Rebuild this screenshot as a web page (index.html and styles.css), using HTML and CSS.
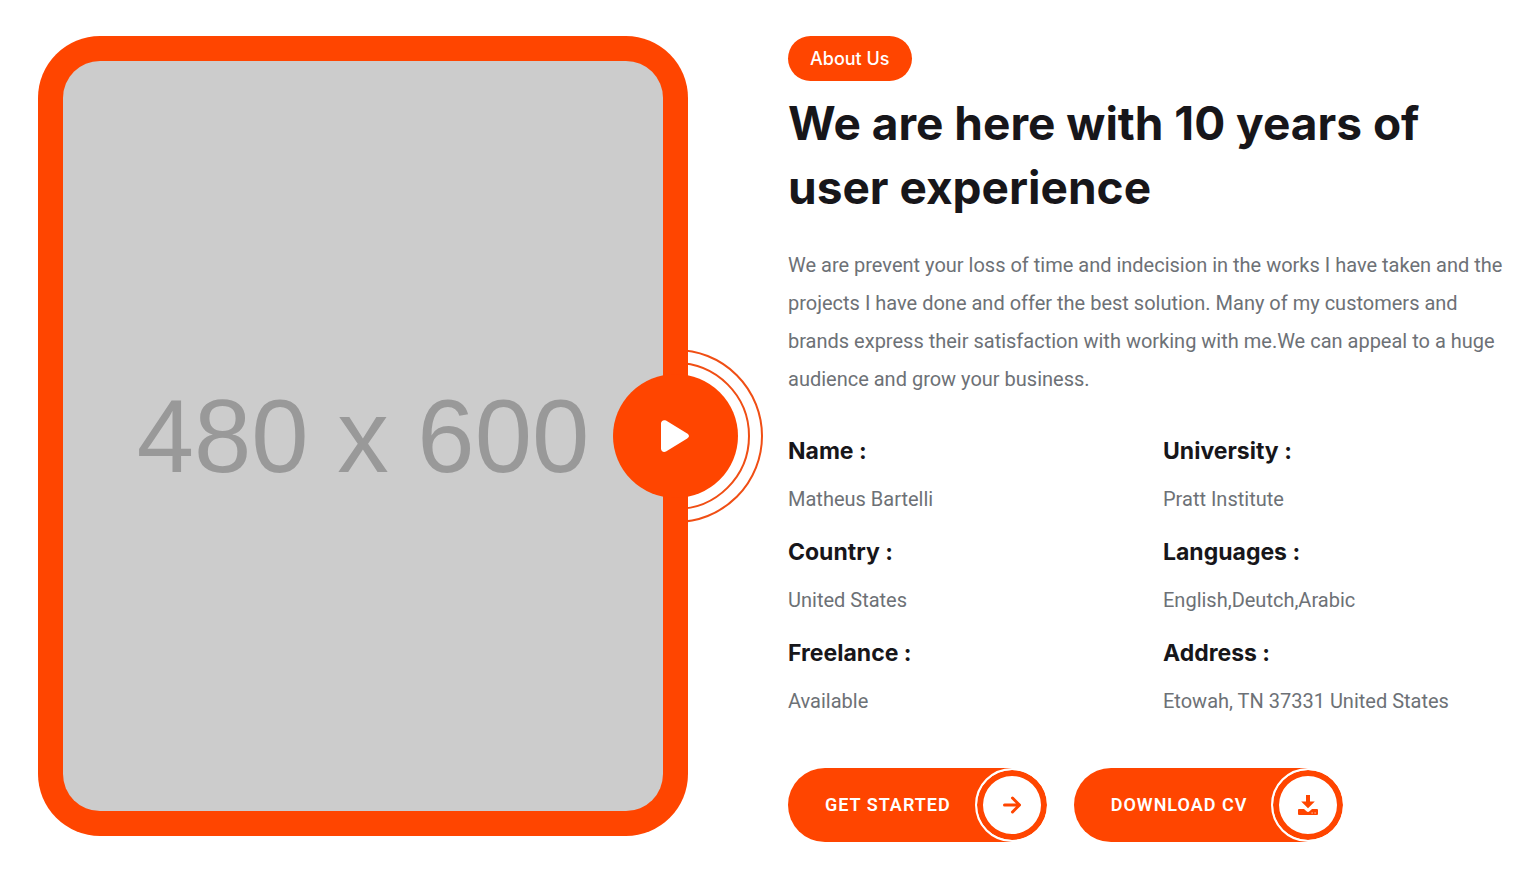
FILE: index.html
```html
<!DOCTYPE html>
<html lang="en">
<head>
<meta charset="utf-8">
<meta name="viewport" content="width=device-width, initial-scale=1">
<title>About Us</title>
<link rel="stylesheet" href="styles.css">
</head>
<body>
<main class="about">
  <div class="media">
    <div class="frame">
      <div class="placeholder">480 x 600</div>
    </div>
    <button class="play" type="button" aria-label="Play video">
      <svg class="play-icon" viewBox="0 0 28 32" aria-hidden="true"><path d="M0 3.500C0 .8 2.600-.7 5 .6L26.200 13.600C28.500 15 28.500 17 26.200 18.400L5 31.400C2.600 32.700 0 31.200 0 28.500Z"/></svg>
    </button>
  </div>
  <section class="content">
    <span class="badge">About Us</span>
    <h1 class="title">We are here with 10 years of user experience</h1>
    <p class="text">We are prevent your loss of time and indecision in the works I have taken and the projects I have done and offer the best solution. Many of my customers and brands express their satisfaction with working with me.We can appeal to a huge audience and grow your business.</p>
    <dl class="facts">
      <div class="fact"><dt class="label">Name :</dt><dd class="value">Matheus Bartelli</dd></div>
      <div class="fact"><dt class="label">University :</dt><dd class="value">Pratt Institute</dd></div>
      <div class="fact"><dt class="label">Country :</dt><dd class="value">United States</dd></div>
      <div class="fact"><dt class="label">Languages :</dt><dd class="value">English,Deutch,Arabic</dd></div>
      <div class="fact"><dt class="label">Freelance :</dt><dd class="value">Available</dd></div>
      <div class="fact"><dt class="label">Address :</dt><dd class="value">Etowah, TN 37331 United States</dd></div>
    </dl>
    <div class="actions">
      <a class="btn" href="#start">GET STARTED
        <span class="btn-icon"><svg width="18" height="18" viewBox="0 0 18 18" aria-hidden="true"><path class="stroke" d="M1.500 9H16M9.500 2L16.500 9L9.500 16"/></svg></span>
      </a>
      <a class="btn" href="#cv">DOWNLOAD CV
        <span class="btn-icon"><svg width="20" height="20" viewBox="0 0 20 20" aria-hidden="true"><path class="fill" d="M8 0H12V6.500H16.800L10 13.300L3.200 6.500H8Z"/><path class="fill" fill-rule="evenodd" d="M1 14H6L8.500 16.300C9.400 17.100 10.600 17.100 11.500 16.300L14 14H19Q20 14 20 15V19Q20 20 19 20H1Q0 20 0 19V15Q0 14 1 14ZM13.600 17.500V18.500H14.600V17.500ZM16.600 17.500V18.500H17.600V17.500Z"/></svg></span>
      </a>
    </div>
  </section>
</main>
</body>
</html>
```
FILE: styles.css
```css
:root {
  --accent: #ff4500;
  --dark: #17161a;
  --muted: #6d7176;
  --heading: Inter, "Open Sans", sans-serif;
}

*,
*::before,
*::after {
  box-sizing: border-box;
}

body {
  margin: 0;
  background: #fff;
  font-family: Roboto, "Liberation Sans", sans-serif;
  font-size: 20px;
  line-height: 38px;
  color: var(--muted);
}

.about {
  display: grid;
  grid-template-columns: 650fr 725fr;
  gap: 100px;
  align-items: start;
  padding: 36px 23px 32px 38px;
}

.media {
  position: relative;
}

.frame {
  position: relative;
  z-index: 1;
  padding: 25px;
  border-radius: 62px;
  background: var(--accent);
}

.placeholder {
  display: flex;
  align-items: center;
  justify-content: center;
  aspect-ratio: 480 / 600;
  border-radius: 37px;
  background: #ccc;
  color: #999;
  font-family: "Liberation Sans", Arial, sans-serif;
  font-size: 103px;
  line-height: 1;
}

/* The disc straddles the frame edge; its rings pass behind the frame. */
.play {
  position: absolute;
  top: 50%;
  right: -50px;
  z-index: 2;
  display: grid;
  place-items: center;
  width: 125px;
  height: 124px;
  margin-top: -62px;
  padding: 0 2px 0 0;
  border: 0;
  border-radius: 50%;
  background: var(--accent);
  cursor: pointer;
}

.media::before,
.media::after {
  content: "";
  position: absolute;
  top: 50%;
  border: 2px solid #f04e14;
  border-radius: 50%;
}

.media::before {
  right: -62px;
  width: 148px;
  height: 148px;
  margin-top: -74px;
}

.media::after {
  right: -75px;
  width: 174px;
  height: 174px;
  margin-top: -87px;
}

.play-icon {
  width: 28px;
  height: 32px;
  fill: #fff;
}

.badge {
  display: block;
  width: fit-content;
  padding: 0 22px;
  border-radius: 23px;
  background: var(--accent);
  color: #fff;
  font-family: var(--heading);
  font-size: 18px;
  font-weight: 500;
  line-height: 45px;
}

.title {
  margin: 10px 0 27px;
  color: var(--dark);
  font-family: var(--heading);
  font-size: 46px;
  font-weight: 700;
  line-height: 64px;
}

.text {
  margin: 0 0 37px;
}

.facts {
  display: grid;
  grid-template-columns: 1fr 1fr;
  gap: 18px 25px;
  margin: 0 0 48px;
}

.label {
  margin-bottom: 13px;
  color: var(--dark);
  font-family: var(--heading);
  font-size: 23px;
  font-weight: 700;
  line-height: 32px;
}

.value {
  margin: 0;
}

.actions {
  display: flex;
  flex-wrap: wrap;
  gap: 25px;
}

/* The fill stops at the middle of the round icon, which caps the pill. */
.btn {
  display: flex;
  align-items: center;
  gap: 24px;
  padding-left: 37px;
  border-radius: 37px;
  background: linear-gradient(var(--accent), var(--accent)) left / calc(100% - 37px) 100% no-repeat;
  color: #fff;
  font-size: 18px;
  font-weight: 600;
  letter-spacing: 1px;
  text-decoration: none;
}

.btn-icon {
  display: grid;
  place-items: center;
  width: 74px;
  height: 74px;
  border: 2px solid #fff;
  border-radius: 50%;
  background: #fff;
  box-shadow: inset 0 0 0 6px var(--accent);
}

.fill {
  fill: var(--accent);
}

.stroke {
  fill: none;
  stroke: var(--accent);
  stroke-width: 3;
  stroke-linecap: round;
  stroke-linejoin: round;
}
```
